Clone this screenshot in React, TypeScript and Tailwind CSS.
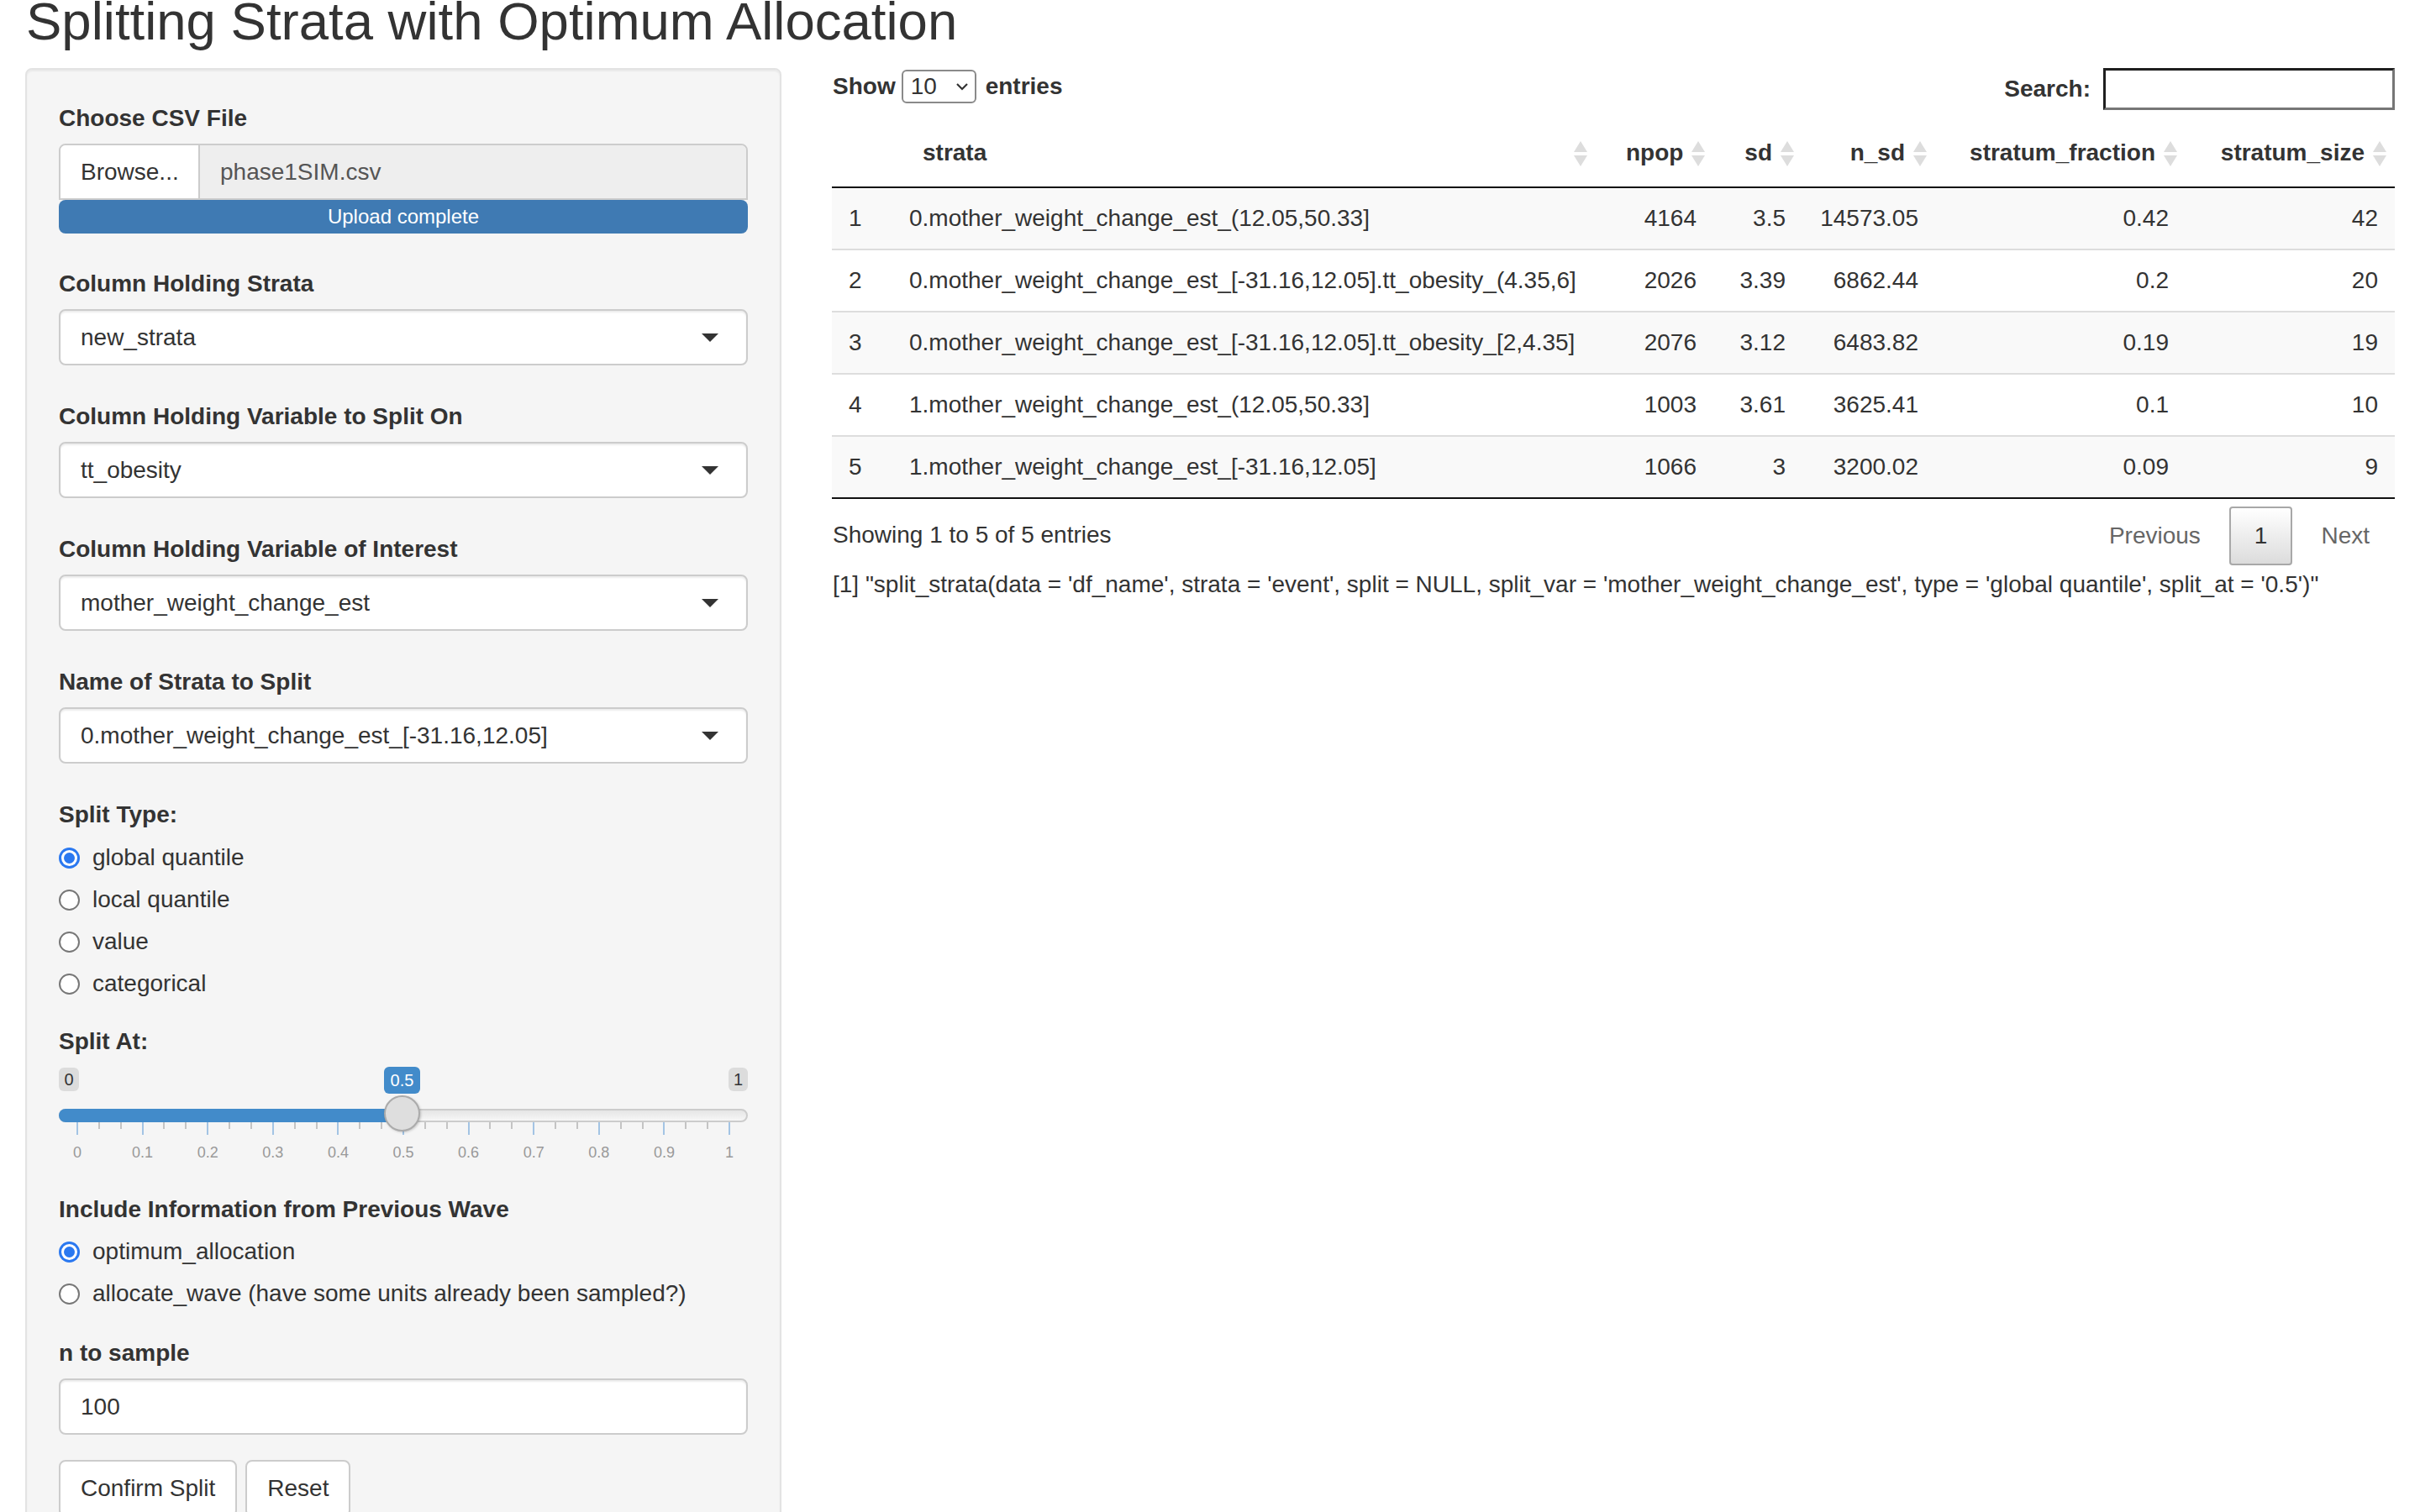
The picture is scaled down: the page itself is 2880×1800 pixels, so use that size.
import React from "react";

const rows = [
  ["1", "0.mother_weight_change_est_(12.05,50.33]", "4164", "3.5", "14573.05", "0.42", "42"],
  ["2", "0.mother_weight_change_est_[-31.16,12.05].tt_obesity_(4.35,6]", "2026", "3.39", "6862.44", "0.2", "20"],
  ["3", "0.mother_weight_change_est_[-31.16,12.05].tt_obesity_[2,4.35]", "2076", "3.12", "6483.82", "0.19", "19"],
  ["4", "1.mother_weight_change_est_(12.05,50.33]", "1003", "3.61", "3625.41", "0.1", "10"],
  ["5", "1.mother_weight_change_est_[-31.16,12.05]", "1066", "3", "3200.02", "0.09", "9"],
];

const headers = ["", "strata", "npop", "sd", "n_sd", "stratum_fraction", "stratum_size"];
const widths = [72, 837, 140, 106, 158, 298, 249];

function SortIcon() {
  return (
    <svg width="16" height="30" viewBox="0 0 16 30" className="absolute right-[10px] top-[26px]">
      <polygon points="0,13 8,0 16,13" fill="#dddddd" />
      <polygon points="0,17 16,17 8,30" fill="#dddddd" />
    </svg>
  );
}

function Caret() {
  return (
    <svg width="20" height="10" viewBox="0 0 20 10">
      <polygon points="0,0 20,0 10,10" fill="#333333" />
    </svg>
  );
}

function Label({ children, className = "" }: { children: React.ReactNode; className?: string }) {
  return <div className={"font-bold leading-[40px] mb-[10px] " + className}>{children}</div>;
}

function SelectBox({ value }: { value: string }) {
  return (
    <div className="h-[67px] border-2 border-[#cccccc] rounded-[8px] bg-white pl-[24px] pr-[33px] flex items-center justify-between shadow-[inset_0_2px_2px_rgba(0,0,0,0.075)]">
      <span>{value}</span>
      <Caret />
    </div>
  );
}

function Radio({ label, checked = false }: { label: string; checked?: boolean }) {
  return (
    <div className="flex items-center h-[40px] mb-[10px]">
      {checked ? (
        <span className="w-[25px] h-[25px] rounded-full bg-[#2a78f0] flex items-center justify-center">
          <span className="w-[19px] h-[19px] rounded-full bg-white flex items-center justify-center">
            <span className="w-[13px] h-[13px] rounded-full bg-[#2a78f0]" />
          </span>
        </span>
      ) : (
        <span className="w-[25px] h-[25px] rounded-full border-2 border-[#777777] bg-white" />
      )}
      <span className="ml-[15px]">{label}</span>
    </div>
  );
}

function Slider() {
  const ticks = Array.from({ length: 31 }, (_, i) => i);
  const step = 77.6 / 3;
  return (
    <div className="relative h-[130px]">
      <div className="absolute left-0 top-[11px] w-[24px] h-[28px] rounded-[6px] bg-[#dcdcdc] text-[20px] leading-[28px] text-center">0</div>
      <div className="absolute right-0 top-[11px] w-[23px] h-[28px] rounded-[6px] bg-[#dcdcdc] text-[20px] leading-[28px] text-center">1</div>
      <div className="absolute left-[387px] top-[10px] w-[43px] h-[32px] rounded-[6px] bg-[#428bca] text-white text-[20px] leading-[32px] text-center">0.5</div>
      <div className="absolute left-0 right-0 top-[60px] h-[16px] rounded-full border-2 border-[#cccccc] bg-[linear-gradient(to_bottom,#dddddd_-50%,#ffffff_150%)]" />
      <div className="absolute left-0 top-[60px] w-[409px] h-[16px] rounded-l-full bg-[#428bca]" />
      {ticks.map((i) => {
        const major = i % 3 === 0;
        return (
          <div
            key={i}
            className={major ? "absolute top-[76px] w-[2px] h-[15px] bg-[#a3c4e4]" : "absolute top-[76px] w-[2px] h-[8px] bg-[#c4c4c4]"}
            style={{ left: 21 + i * step }}
          />
        );
      })}
      {Array.from({ length: 11 }, (_, i) => i).map((i) => (
        <div
          key={"l" + i}
          className="absolute top-[100px] -translate-x-1/2 text-[18px] leading-[24px] text-[#999999]"
          style={{ left: 22 + i * 77.6 }}
        >
          {i === 0 ? "0" : i === 10 ? "1" : "0." + i}
        </div>
      ))}
      <div className="absolute left-[387px] top-[44px] w-[43px] h-[43px] rounded-full border-2 border-[#ababab] bg-[#dedede] shadow-[1px_1px_3px_rgba(0,0,0,0.2)]" />
    </div>
  );
}

function Sidebar() {
  return (
    <div className="w-[900px] shrink-0 h-[1800px] flex flex-col bg-[#f5f5f5] border-2 border-[#e3e3e3] rounded-[8px] px-[38px] pt-[38px] shadow-[inset_0_2px_2px_rgba(0,0,0,0.05)]">
      <Label>Choose CSV File</Label>
      <div className="flex h-[67px] border-2 border-[#cccccc] rounded-t-[8px] overflow-hidden">
        <div className="w-[166px] bg-white border-r-2 border-[#cccccc] pl-[24px] flex items-center">Browse...</div>
        <div className="flex-1 bg-[#eeeeee] pl-[24px] flex items-center text-[#555555]">phase1SIM.csv</div>
      </div>
      <div className="h-[40px] bg-[#3f7ab3] rounded-[8px] text-white text-[24px] leading-[40px] text-center">Upload complete</div>

      <Label className="mt-[40px]">Column Holding Strata</Label>
      <SelectBox value="new_strata" />

      <Label className="mt-[41px]">Column Holding Variable to Split On</Label>
      <SelectBox value="tt_obesity" />

      <Label className="mt-[41px]">Column Holding Variable of Interest</Label>
      <SelectBox value="mother_weight_change_est" />

      <Label className="mt-[41px]">Name of Strata to Split</Label>
      <SelectBox value="0.mother_weight_change_est_[-31.16,12.05]" />

      <Label className="mt-[41px] !mb-[11px]">Split Type:</Label>
      <Radio label="global quantile" checked />
      <Radio label="local quantile" />
      <Radio label="value" />
      <Radio label="categorical" />

      <Label className="mt-[19px] !mb-0">Split At:</Label>
      <Slider />

      <Label className="mt-[30px]">Include Information from Previous Wave</Label>
      <Radio label="optimum_allocation" checked />
      <Radio label="allocate_wave (have some units already been sampled?)" />

      <Label className="mt-[21px]">n to sample</Label>
      <div className="h-[67px] shrink-0 border-2 border-[#cccccc] rounded-[8px] bg-white pl-[24px] flex items-center shadow-[inset_0_2px_2px_rgba(0,0,0,0.075)]">100</div>

      <div className="mt-[30px] flex gap-[10px]">
        <div className="h-[68px] px-[24px] border-2 border-[#cccccc] rounded-[8px] bg-white flex items-center">Confirm Split</div>
        <div className="h-[68px] px-[24px] border-2 border-[#cccccc] rounded-[8px] bg-white flex items-center">Reset</div>
      </div>
    </div>
  );
}

function MainPanel() {
  return (
    <div className="flex-1">
      <div className="flex justify-between items-start">
        <div className="flex items-center h-[44px] font-bold">
          <span className="ml-[1px]">Show</span>
          <div className="ml-[7px] w-[89px] h-[40px] border-2 border-[#8a8a8a] rounded-[6px] bg-white flex items-center justify-between pl-[9px] pr-[8px] font-normal">
            <span>10</span>
            <svg width="14" height="9" viewBox="0 0 14 9">
              <polyline points="1,1 7,7 13,1" fill="none" stroke="#333333" strokeWidth="2.2" />
            </svg>
          </div>
          <span className="ml-[11px]">entries</span>
        </div>
        <div className="flex items-center h-[50px]">
          <span className="font-bold">Search:</span>
          <div className="ml-[15px] w-[347px] h-[50px] bg-white border-[3px] border-t-[#1f1f1f] border-l-[#1f1f1f] border-r-[#767676] border-b-[#767676]" />
        </div>
      </div>

      <table className="mt-[11px] w-full table-fixed border-separate border-spacing-0">
        <colgroup>
          {widths.map((w, i) => (
            <col key={i} style={{ width: w }} />
          ))}
        </colgroup>
        <thead>
          <tr>
            {headers.map((h, i) => (
              <th
                key={i}
                className={
                  "relative font-bold leading-[40px] py-[20px] pl-[36px] pr-[36px] border-b-2 border-[#111111] whitespace-nowrap " +
                  (i <= 1 ? "text-left" : "text-right")
                }
              >
                {h}
                {i > 0 && <SortIcon />}
              </th>
            ))}
          </tr>
        </thead>
        <tbody>
          {rows.map((r, ri) => (
            <tr key={ri} className={ri % 2 === 0 ? "bg-[#f9f9f9]" : "bg-white"}>
              {r.map((c, ci) => (
                <td
                  key={ci}
                  className={
                    "leading-[40px] py-[16px] px-[20px] whitespace-nowrap " +
                    (ci <= 1 ? "text-left " : "text-right ") +
                    (ri > 0 ? "border-t-2 border-[#dddddd] " : "") +
                    (ri === rows.length - 1 ? "border-b-2 border-b-[#111111]" : "")
                  }
                >
                  {c}
                </td>
              ))}
            </tr>
          ))}
        </tbody>
      </table>

      <div className="flex justify-between items-start">
        <div className="mt-[23px] ml-[1px]">Showing 1 to 5 of 5 entries</div>
        <div className="mt-[9px] flex items-center">
          <div className="px-[28px] py-[13px] border-2 border-transparent text-[#666666]">Previous</div>
          <div className="ml-[4px] px-[28px] py-[13px] border-2 border-[#a8a8a8] rounded-[4px] bg-[linear-gradient(to_bottom,#ffffff_0%,#dcdcdc_100%)]">1</div>
          <div className="ml-[4px] px-[28px] py-[13px] border-2 border-transparent text-[#666666]">Next</div>
        </div>
      </div>

      <div className="mt-[3px] ml-[1px] whitespace-nowrap">
        [1] "split_strata(data = 'df_name', strata = 'event', split = NULL, split_var = 'mother_weight_change_est', type = 'global quantile', split_at = '0.5')"
      </div>
    </div>
  );
}

export default function App() {
  return (
    <div className="w-[2880px] h-[1800px] overflow-hidden bg-white px-[30px] font-['Liberation_Sans',Arial,sans-serif] text-[28px] leading-[40px] text-[#333333]">
      <h2 className="mt-[-8px] ml-[1px] text-[63.5px] leading-[66px] font-normal">Splitting Strata with Optimum Allocation</h2>
      <div className="mt-[23px] flex gap-[60px]">
        <Sidebar />
        <MainPanel />
      </div>
    </div>
  );
}
